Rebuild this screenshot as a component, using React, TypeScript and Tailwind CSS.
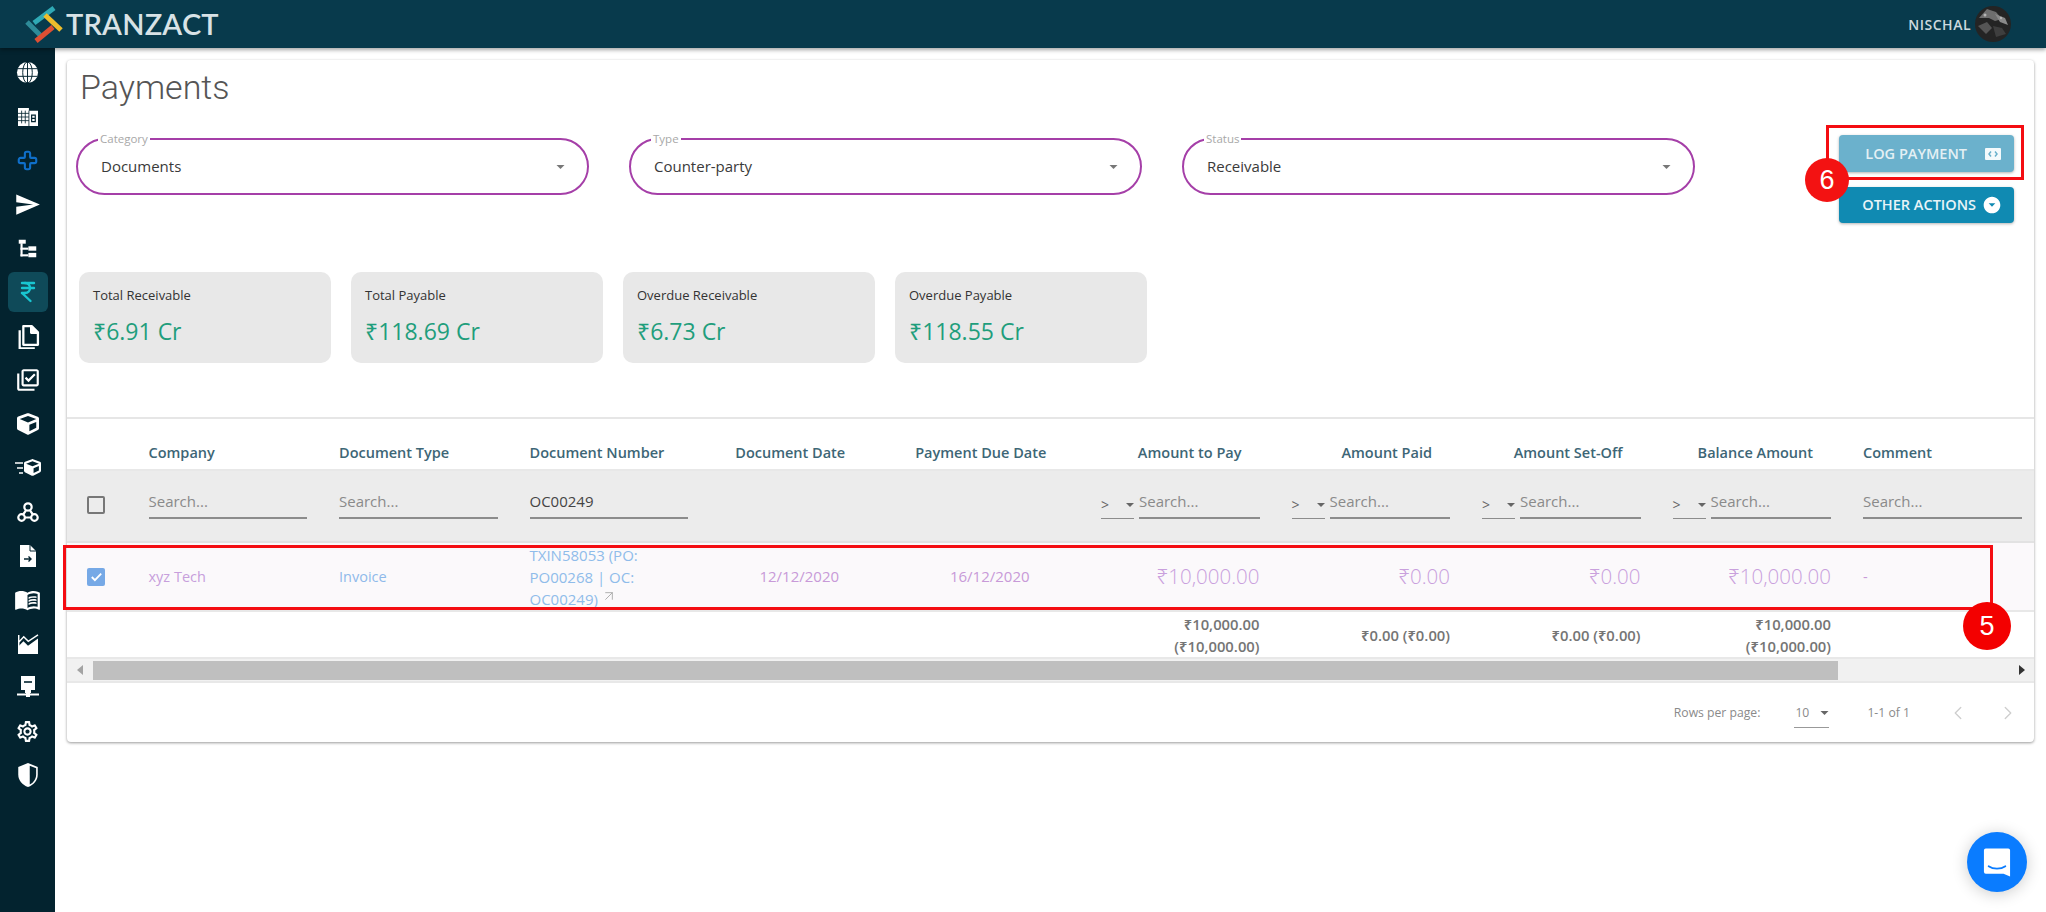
import { ArrowUpRight, ChevronLeft, ChevronRight, Cross, IndianRupee } from "lucide-react"
import { FaCube } from "react-icons/fa"
import {
  MdArrowDropDownCircle,
  MdMenuBook,
  MdOutlineLibraryAddCheck,
  MdOutlineSettings,
  MdSend,
} from "react-icons/md"

const DARK = "#03232f"

function Globe() {
  return (
    <svg viewBox="0 0 24 24" className="h-[23px] w-[23px]">
      <circle cx="12" cy="12" r="11" fill="#fff" />
      <g fill="none" stroke={DARK} strokeWidth="1">
        <ellipse cx="12" cy="12" rx="5" ry="11" />
        <path d="M12 1v22M1.500 8h21M1.500 16h21" />
      </g>
    </svg>
  )
}

function Building() {
  return (
    <svg viewBox="0 0 24 22" className="h-[20px] w-[22px]">
      <path d="M1 1h12v3h10v17H1z" fill="#fff" />
      <path d="M5 4v14M9 4v14M1 7h12M1 11h12M1 15h12M13 4v17" stroke={DARK} strokeWidth="0.9" fill="none" />
      <path d="M16 9h4v7h-4zM16 12.500h4" stroke={DARK} strokeWidth="1.300" fill="none" />
    </svg>
  )
}

function Tree() {
  return (
    <svg viewBox="0 0 24 24" className="h-[21px] w-[21px]" fill="#fff">
      <rect x="2" y="2" width="8" height="4.500" />
      <rect x="4" y="6" width="2.400" height="15" />
      <rect x="4" y="11" width="9" height="2.400" />
      <rect x="4" y="18.600" width="9" height="2.400" />
      <rect x="13" y="9.500" width="9" height="5" />
      <rect x="13" y="17" width="9" height="5" />
    </svg>
  )
}

function Docs() {
  return (
    <svg viewBox="0 0 24 24" className="h-[25px] w-[25px]" fill="none" stroke="#fff" strokeWidth="2.200" strokeLinejoin="round">
      <path d="M8 2h8l6 6v12H8z" />
      <path d="M15.500 2v6.500H22" fill="#fff" />
      <path d="M4.500 6v17.500H19" />
    </svg>
  )
}

function FastBox() {
  return (
    <div className="flex items-center gap-[1px]">
      <svg viewBox="0 0 8 14" className="h-[14px] w-[8px]">
        <path d="M0 2h8M2 7h6M4 12h4" stroke="#fff" strokeWidth="1.600" />
      </svg>
      <FaCube className="h-[17px] w-[17px] text-white" />
    </div>
  )
}

function Hub() {
  return (
    <svg viewBox="0 0 24 24" className="h-[22px] w-[22px]" fill="none" stroke="#fff" strokeWidth="2.400">
      <circle cx="12" cy="6.500" r="4" />
      <circle cx="5" cy="18" r="3.600" />
      <circle cx="19" cy="18" r="3.600" />
      <path d="M10 10l-3.500 5M14 10l3.500 5M8.600 18h6.800" />
    </svg>
  )
}

function FileArrow() {
  return (
    <svg viewBox="0 0 24 24" className="h-[24px] w-[24px]">
      <path d="M4 1h10l6 6v16H4z" fill="#fff" />
      <path d="M14 1v6h6" fill="none" stroke={DARK} strokeWidth="1" />
      <path d="M8 15h7M12.500 12.500L15 15l-2.500 2.500" fill="none" stroke={DARK} strokeWidth="1.400" />
    </svg>
  )
}

function Chart() {
  return (
    <svg viewBox="0 0 24 22" className="h-[20px] w-[22px]">
      <path d="M1 21V13l6-6 5 5 11-8v17z" fill="#fff" transform="translate(0 1)" />
      <path d="M1.800 1v20M1.800 9l5.500-6 5 5L23 1" fill="none" stroke="#fff" strokeWidth="1.600" />
    </svg>
  )
}

function Server() {
  return (
    <svg viewBox="0 0 24 24" className="h-[24px] w-[24px]" fill="#fff">
      <path d="M5 1h14v14H5z" />
      <path d="M8 7h8" stroke={DARK} strokeWidth="1.600" />
      <rect x="9" y="15" width="6" height="3" />
      <rect x="1" y="18.500" width="22" height="2" />
      <rect x="10" y="18" width="4" height="4" />
    </svg>
  )
}

function Shield() {
  return (
    <svg viewBox="0 0 24 24" className="h-[26px] w-[26px]">
      <path d="M12 1l9 3.500v7c0 5.500-3.800 9.800-9 11.500-5.200-1.700-9-6-9-11.500v-7z" fill="#fff" />
      <path d="M13.600 3.500l5.900 2.200v5.800c0 4.300-2.600 7.700-5.900 9.200z" fill={DARK} />
    </svg>
  )
}

const NAV = [
  { key: "globe", icon: <Globe /> },
  { key: "building", icon: <Building /> },
  { key: "plus", icon: <Cross className="h-[21px] w-[21px] text-[#0f6fc9]" strokeWidth={2.400} /> },
  { key: "send", icon: <MdSend className="h-[27px] w-[27px] text-white" /> },
  { key: "tree", icon: <Tree /> },
  { key: "rupee", icon: <IndianRupee className="h-[24px] w-[24px] text-[#19c6d1]" strokeWidth={2.400} />, active: true },
  { key: "docs", icon: <Docs /> },
  { key: "check", icon: <MdOutlineLibraryAddCheck className="h-[26px] w-[26px] text-white" /> },
  { key: "box", icon: <FaCube className="h-[22px] w-[22px] text-white" /> },
  { key: "fast", icon: <FastBox /> },
  { key: "hub", icon: <Hub /> },
  { key: "file", icon: <FileArrow /> },
  { key: "book", icon: <MdMenuBook className="h-[27px] w-[27px] text-white" /> },
  { key: "chart", icon: <Chart /> },
  { key: "server", icon: <Server /> },
  { key: "gear", icon: <MdOutlineSettings className="h-[25px] w-[25px] text-white" /> },
  { key: "shield", icon: <Shield /> },
]

const FILTERS = [
  { label: "Category", value: "Documents" },
  { label: "Type", value: "Counter-party" },
  { label: "Status", value: "Receivable" },
]

const STATS = [
  { label: "Total Receivable", value: "₹6.91 Cr" },
  { label: "Total Payable", value: "₹118.69 Cr" },
  { label: "Overdue Receivable", value: "₹6.73 Cr" },
  { label: "Overdue Payable", value: "₹118.55 Cr" },
]

const AMOUNT_COLUMNS = [
  { head: "Amount to Pay", value: "₹10,000.00", total: ["₹10,000.00", "(₹10,000.00)"] },
  { head: "Amount Paid", value: "₹0.00", total: ["₹0.00 (₹0.00)"] },
  { head: "Amount Set-Off", value: "₹0.00", total: ["₹0.00 (₹0.00)"] },
  { head: "Balance Amount", value: "₹10,000.00", total: ["₹10,000.00", "(₹10,000.00)"] },
]

function Caret({ className }: { className: string }) {
  return (
    <svg viewBox="0 0 10 5" className={className}>
      <path d="M0 0h10L5 5z" fill="currentColor" />
    </svg>
  )
}

function SearchInput({ value }: { value?: string }) {
  return (
    <div className={`h-[34px] border-b-2 border-[#8c8c8c] pt-[6px] text-[15px] leading-[20px] ${value ? "text-[#444]" : "text-[#8a8a8a]"}`}>
      {value ?? "Search..."}
    </div>
  )
}

function Logo() {
  return (
    <svg viewBox="0 0 40 38" className="h-[38px] w-[40px]">
      <path d="M3 17l13 13" stroke="#2e8b99" strokeWidth="5" />
      <path d="M10 18L30 3" stroke="#2fa9b5" strokeWidth="5" />
      <path d="M21 10l16 15" stroke="#eebd2c" strokeWidth="5" />
      <path d="M12 36l17-14" stroke="#df4f33" strokeWidth="5" />
    </svg>
  )
}

function Avatar() {
  return (
    <svg viewBox="0 0 36 36" className="ml-[4px] h-[36px] w-[36px] rounded-full bg-[#242424]">
      <path d="M4 12l8-9 9 3 6 7-7 2-6-3z" fill="#6e6e6e" />
      <path d="M20 8l10 4 3 7-8-3z" fill="#8a8a8a" />
      <path d="M3 20l9-4 5 6-6 6z" fill="#555" />
      <path d="M18 20l9 2 4 6-10 3z" fill="#3e3e3e" />
      <circle cx="10" cy="9" r="1.500" fill="#b5b5b5" />
      <circle cx="26" cy="12" r="1.200" fill="#b5b5b5" />
    </svg>
  )
}

export default function App() {
  return (
    <div className="relative flex h-[912px] w-[2046px] flex-col overflow-hidden bg-white font-['Open_Sans','Noto_Sans',sans-serif]">
      {/* Top bar */}
      <header className="z-10 flex h-[48px] items-center bg-[#083a4c] pl-[24px] pr-[35px] shadow-[0_2px_4px_rgba(0,0,0,0.35)]">
        <Logo />
        <span className="ml-[2px] font-['Lato',sans-serif] text-[29px] font-semibold tracking-[0.2px] text-[#d8e2e6]">TRANZACT</span>
        <span className="ml-auto text-[14px] font-semibold tracking-[0.5px] text-[#cdd9de]">NISCHAL</span>
        <Avatar />
      </header>

      <div className="flex flex-1">
        {/* Sidebar */}
        <nav className="flex w-[55px] shrink-0 flex-col items-center bg-[#03232f] pt-[3px]">
          {NAV.map((item) => (
            <div key={item.key} className="flex h-[43.900px] items-center justify-center">
              <div className={`flex h-[40px] w-[40px] items-center justify-center rounded-[6px] ${item.active ? "bg-[#0f4a59]" : ""}`}>
                {item.icon}
              </div>
            </div>
          ))}
        </nav>

        <main className="min-w-0 flex-1 pl-[12px] pr-[12px] pt-[12px]">
          <div className="h-[682px] overflow-hidden rounded-[4px] bg-white shadow-[0_1px_3px_rgba(0,0,0,0.4)]">
            {/* Title, filters, stats */}
            <div className="h-[357px] pl-[9px] pr-[20px]">
              <h1 className="ml-[4px] font-['Roboto',sans-serif] text-[34px] font-light leading-[54px] text-[#555]">Payments</h1>
              <div className="mt-[24px] flex h-[85px] items-start gap-[40px]">
                {FILTERS.map((f) => (
                  <div key={f.label} className="relative flex h-[57px] w-[513px] items-center justify-between rounded-full border-2 border-[#a53fa8] pl-[23px] pr-[22px] text-[15px] text-[#3a3a3a]">
                    <span className="absolute left-[20px] top-[-7px] bg-white px-[2px] text-[11.500px] leading-[12px] text-[#a8a8a8]">{f.label}</span>
                    {f.value}
                    <Caret className="h-[4px] w-[9px] text-[#777]" />
                  </div>
                ))}
                <div className="ml-auto mt-[-3px] flex w-[175px] flex-col gap-[15px]">
                  <button className="flex h-[37px] items-center justify-end gap-[18px] rounded-[4px] bg-[#6bb1cc] pr-[13px] text-[14.500px] font-semibold text-[#e4f0f4] shadow-[0_1px_3px_rgba(0,0,0,0.3)]">
                    LOG PAYMENT
                    <svg viewBox="0 0 16 12" className="h-[12px] w-[16px]">
                      <rect width="16" height="12" rx="1" fill="#f4fafc" />
                      <path d="M6 3.500L4 6l2 2.500M10 3.500L12 6l-2 2.500" fill="none" stroke="#6bb1cc" strokeWidth="1.500" />
                    </svg>
                  </button>
                  <button className="flex h-[36px] items-center justify-end gap-[6px] rounded-[4px] bg-[#108ab2] pr-[12px] text-[14.500px] font-semibold text-[#e8f4f8] shadow-[0_1px_3px_rgba(0,0,0,0.3)]">
                    OTHER ACTIONS
                    <MdArrowDropDownCircle className="h-[20px] w-[20px] text-white" />
                  </button>
                </div>
              </div>
              <div className="ml-[3px] mt-[49px] flex gap-[20px]">
                {STATS.map((s) => (
                  <div key={s.label} className="h-[91px] w-[252px] rounded-[10px] bg-[#e8e8e8] pl-[14px] pt-[14px]">
                    <div className="text-[13px] leading-[18px] text-[#333]">{s.label}</div>
                    <div className="mt-[11px] text-[23px] leading-[32px] text-[#1f9e7c]">{s.value}</div>
                  </div>
                ))}
              </div>
            </div>

            <div className="border-t-2 border-[#e6e6e6]">
              <table className="w-[1970.500px] table-fixed border-collapse">
                <colgroup>
                  <col className="w-[65.500px]" />
                  {Array.from({ length: 10 }, (_, i) => (
                    <col key={i} className="w-[190.500px]" />
                  ))}
                </colgroup>
                <thead>
                  <tr className="h-[51px] border-b-2 border-[#e8e8e8] text-[14.500px] text-[#3d6676]">
                    <th />
                    <th className="px-[16px] pt-[17px] text-left font-semibold">Company</th>
                    <th className="px-[16px] pt-[17px] text-left font-semibold">Document Type</th>
                    <th className="px-[16px] pt-[17px] text-left font-semibold">Document Number</th>
                    <th className="pl-[16px] pr-[34px] pt-[17px] text-center font-semibold">Document Date</th>
                    <th className="pl-[16px] pr-[34px] pt-[17px] text-center font-semibold">Payment Due Date</th>
                    {AMOUNT_COLUMNS.map((c) => (
                      <th key={c.head} className="pl-[16px] pr-[34px] pt-[17px] text-right font-semibold">{c.head}</th>
                    ))}
                    <th className="px-[16px] pt-[17px] text-left font-semibold">Comment</th>
                  </tr>
                </thead>
                <tbody>
                  <tr className="h-[72px] border-b-2 border-[#e2e2e2] bg-[#ececec]">
                    <td className="pb-[2px] pl-[20px]">
                      <div className="h-[18px] w-[18px] rounded-[2px] border-2 border-[#777]" />
                    </td>
                    <td className="px-[16px] pt-[14px] align-top"><SearchInput /></td>
                    <td className="px-[16px] pt-[14px] align-top"><SearchInput /></td>
                    <td className="px-[16px] pt-[14px] align-top"><SearchInput value="OC00249" /></td>
                    <td />
                    <td />
                    {AMOUNT_COLUMNS.map((c) => (
                      <td key={c.head} className="px-[16px] pt-[14px] align-top">
                        <div className="flex gap-[5px]">
                          <div className="flex h-[34px] w-[33px] items-center justify-between border-b-[1.500px] border-[#8c8c8c] pt-[6px] text-[14px] text-[#666]">
                            &gt;
                            <Caret className="h-[4px] w-[8px] text-[#666]" />
                          </div>
                          <div className="flex-1"><SearchInput /></div>
                        </div>
                      </td>
                    ))}
                    <td className="px-[16px] pt-[14px] align-top"><SearchInput /></td>
                  </tr>
                  <tr className="h-[69px] border-b-2 border-[#e8e8e8] bg-[#fbf9fb]">
                    <td className="pl-[20px]">
                      <div className="flex h-[18px] w-[18px] items-center justify-center rounded-[2px] bg-[#76a9e6]">
                        <svg viewBox="0 0 16 16" className="h-[15px] w-[15px]">
                          <path d="M3 8.500l3.300 3.300L13 5" fill="none" stroke="#fff" strokeWidth="2" />
                        </svg>
                      </div>
                    </td>
                    <td className="px-[16px] text-[14.500px] text-[#c79fdc]">xyz Tech</td>
                    <td className="px-[16px] text-[14.500px] text-[#8fb9ea]">Invoice</td>
                    <td className="px-[16px] text-[15px] leading-[22px] text-[#8fbcea]">
                      TXIN58053 (PO: PO00268 | OC: OC00249)
                      <ArrowUpRight className="ml-[3px] inline h-[16px] w-[16px] align-top text-[#aaa]" strokeWidth={1.400} />
                    </td>
                    <td className="px-[16px] text-center text-[15px] text-[#c89ad8]">12/12/2020</td>
                    <td className="px-[16px] text-center text-[15px] text-[#c89ad8]">16/12/2020</td>
                    {AMOUNT_COLUMNS.map((c) => (
                      <td key={c.head} className="px-[16px] text-right text-[20.500px] font-light text-[#c9a0dd]">{c.value}</td>
                    ))}
                    <td className="px-[16px] text-[14.500px] text-[#c89ad8]">-</td>
                  </tr>
                  <tr className="h-[46px] text-right text-[14.800px] font-semibold leading-[22px] text-[#757575]">
                    <td colSpan={6} />
                    {AMOUNT_COLUMNS.map((c) => (
                      <td key={c.head} className="px-[16px]">
                        {c.total.map((line) => (
                          <div key={line}>{line}</div>
                        ))}
                      </td>
                    ))}
                    <td />
                  </tr>
                </tbody>
              </table>

              {/* Horizontal scrollbar */}
              <div className="flex h-[26px] items-center border-y-2 border-[#e8e8e8] bg-[#f1f1f1]">
                <div className="flex w-[26px] justify-center">
                  <svg viewBox="0 0 6 10" className="h-[10px] w-[6px] text-[#a3a3a3]"><path d="M6 0v10L0 5z" fill="currentColor" /></svg>
                </div>
                <div className="h-[19px] w-[1745px] bg-[#bfbfbf]" />
                <div className="flex flex-1 justify-end pr-[9px]">
                  <svg viewBox="0 0 6 10" className="h-[10px] w-[6px] text-[#333]"><path d="M0 0v10l6-5z" fill="currentColor" /></svg>
                </div>
              </div>

              {/* Pagination */}
              <div className="flex h-[58px] items-center justify-end pr-[15px] pt-[2px] text-[12.200px] text-[#8a8a8a]">
                <span>Rows per page:</span>
                <div className="ml-[34px] flex h-[30px] w-[35px] items-center justify-between border-b-[1.500px] border-[#999] pl-[1px] pt-[1px]">
                  10
                  <Caret className="h-[4px] w-[9px] text-[#666]" />
                </div>
                <span className="ml-[38px]">1-1 of 1</span>
                <ChevronLeft className="ml-[37px] h-[22px] w-[22px] text-[#cfcfcf]" strokeWidth={1.500} />
                <ChevronRight className="ml-[28px] h-[22px] w-[22px] text-[#cfcfcf]" strokeWidth={1.500} />
              </div>
            </div>
          </div>
        </main>
      </div>

      {/* Annotations over the screenshot */}
      <div className="absolute left-[63px] top-[545px] h-[65px] w-[1930px] border-[3px] border-[#f40d12]" />
      <div className="absolute left-[1826px] top-[125px] h-[55px] w-[198px] border-[3px] border-[#f40d12]" />
      <div className="absolute left-[1805px] top-[158px] flex h-[44px] w-[44px] items-center justify-center rounded-full bg-[#f31212] font-['Liberation_Sans',sans-serif] text-[27px] text-white">6</div>
      <div className="absolute left-[1963px] top-[602px] flex h-[48px] w-[48px] items-center justify-center rounded-full bg-[#f30000] font-['Liberation_Sans',sans-serif] text-[27px] text-white">5</div>

      {/* Chat launcher */}
      <div className="absolute left-[1967px] top-[832px] flex h-[60px] w-[60px] items-center justify-center rounded-full bg-[#0a7cff] shadow-[0_2px_16px_rgba(0,0,0,0.2)]">
        <svg viewBox="0 0 30 32" className="h-[31px] w-[28px]">
          <path d="M3 1h24a2 2 0 0 1 2 2v28l-7-3H3a2 2 0 0 1-2-2V3a2 2 0 0 1 2-2z" fill="#fff" />
          <path d="M6 20c5 3.500 13 3.500 18 0" fill="none" stroke="#0a7cff" strokeWidth="1.800" strokeLinecap="round" />
        </svg>
      </div>
    </div>
  )
}
